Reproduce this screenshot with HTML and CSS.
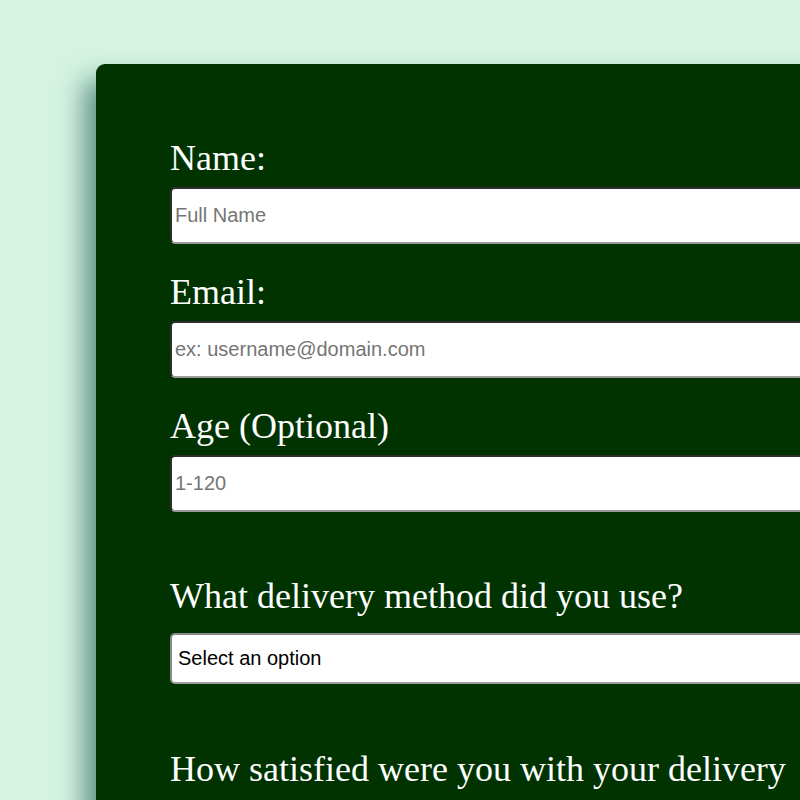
FILE: index.html
```html
<!DOCTYPE html>
<html>
<head>
<meta charset="utf-8">
<link rel="stylesheet" href="styles.css">
</head>
<body>
<form class="card">
  <div class="field">
    <label class="label" for="name">Name:</label>
    <input class="text-input" id="name" type="text" placeholder="Full Name">
  </div>
  <div class="field">
    <label class="label" for="email">Email:</label>
    <input class="text-input" id="email" type="email" placeholder="ex: username@domain.com">
  </div>
  <div class="field">
    <label class="label" for="age">Age (Optional)</label>
    <input class="text-input" id="age" type="text" placeholder="1-120">
  </div>
  <div class="field section">
    <label class="label label-select" for="delivery">What delivery method did you use?</label>
    <div class="select-box">Select an option</div>
  </div>
  <div class="field section section-last">
    <p class="label label-question">How satisfied were you with your delivery experience?</p>
  </div>
</form>
</body>
</html>
```
FILE: styles.css
```css
html, body {
  margin: 0;
  padding: 0;
  overflow: hidden;
  height: 800px;
}
body {
  background: #d4f3e2;
  font-family: "Liberation Serif", "Times New Roman", serif;
}
.card {
  margin: 64px 0 0 96px;
  width: 900px;
  min-height: 900px;
  box-sizing: border-box;
  padding: 74px 146px 0 74px;
  background: #003300;
  border-radius: 9px;
  box-shadow: -12px 16px 26px rgba(0, 70, 60, 0.55);
}
.field {
  display: flex;
  flex-direction: column;
  margin-bottom: 28px;
}
.section {
  margin-top: 64px;
}
.section-last {
  margin-top: 62px;
}
.label {
  display: block;
  margin: 0 0 9px 0;
  color: #ffffff;
  font-size: 36px;
  line-height: 40px;
}
.label-select {
  margin-bottom: 17px;
}
.label-question {
  line-height: 46px;
}
.text-input {
  display: block;
  width: 100%;
  height: 57px;
  box-sizing: border-box;
  margin: 0;
  padding: 0 3px;
  border-width: 2px;
  border-style: solid;
  border-color: #2e2e2e #9a9a9a #9a9a9a #2e2e2e;
  border-radius: 5px;
  background: #ffffff;
  font-family: "Liberation Sans", Arial, sans-serif;
  font-size: 20px;
  color: #000;
}
.text-input::placeholder {
  color: #757575;
}
.select-box {
  box-sizing: border-box;
  width: 100%;
  height: 51px;
  display: flex;
  align-items: center;
  padding: 0 6px;
  border: 2px solid #8a8a8a;
  border-bottom-color: #a0a0a0;
  border-radius: 5px;
  background: #ffffff;
  font-family: "Liberation Sans", Arial, sans-serif;
  font-size: 20px;
  color: #000;
}
```
